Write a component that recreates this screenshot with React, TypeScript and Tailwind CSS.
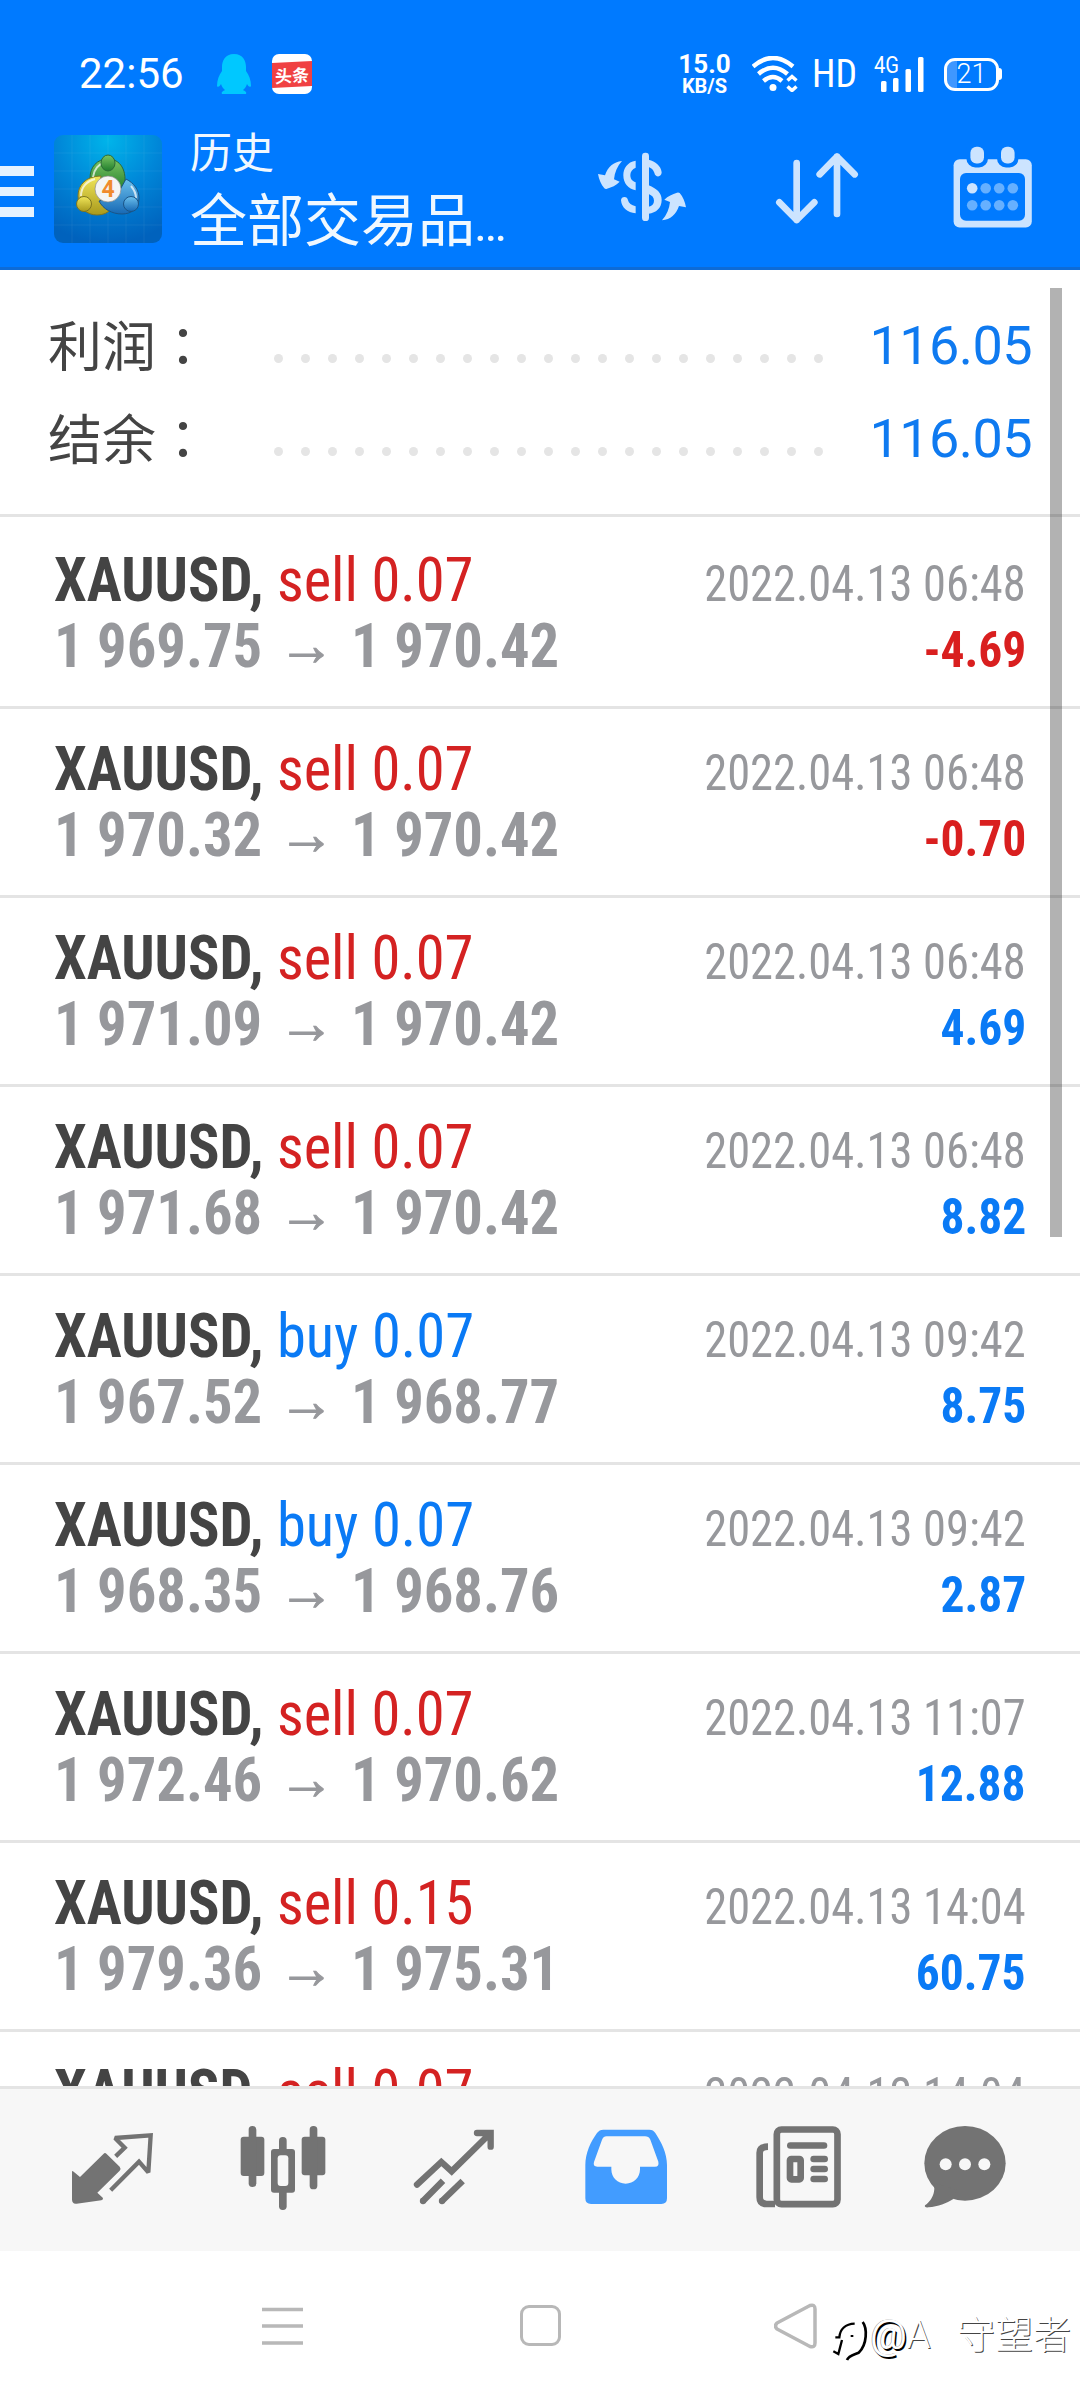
import React from "react";

interface Deal {
  side: "sell" | "buy";
  volume: string;
  open: string;
  close: string;
  time: string;
  profit: string;
}

const deals: Deal[] = [
  { side: "sell", volume: "0.07", open: "1 969.75", close: "1 970.42", time: "2022.04.13 06:48", profit: "-4.69" },
  { side: "sell", volume: "0.07", open: "1 970.32", close: "1 970.42", time: "2022.04.13 06:48", profit: "-0.70" },
  { side: "sell", volume: "0.07", open: "1 971.09", close: "1 970.42", time: "2022.04.13 06:48", profit: "4.69" },
  { side: "sell", volume: "0.07", open: "1 971.68", close: "1 970.42", time: "2022.04.13 06:48", profit: "8.82" },
  { side: "buy", volume: "0.07", open: "1 967.52", close: "1 968.77", time: "2022.04.13 09:42", profit: "8.75" },
  { side: "buy", volume: "0.07", open: "1 968.35", close: "1 968.76", time: "2022.04.13 09:42", profit: "2.87" },
  { side: "sell", volume: "0.07", open: "1 972.46", close: "1 970.62", time: "2022.04.13 11:07", profit: "12.88" },
  { side: "sell", volume: "0.15", open: "1 979.36", close: "1 975.31", time: "2022.04.13 14:04", profit: "60.75" },
  { side: "sell", volume: "0.07", open: "1 979.36", close: "1 975.31", time: "2022.04.13 14:04", profit: "28.35" },
];

const StatusBar: React.FC = () => (
  <div className="flex h-[54px] items-center text-white">
    <span className="ml-[79px] w-[106px] text-[42px] leading-none">22:56</span>
    <svg className="ml-[32px] h-[40px] w-[34px]" viewBox="0 0 34 40" fill="#00c8ff">
      <path d="M17 0C8 0 5 7 5 13v4c-3 4-5 9-5 15 1 2 3 0 4-2 1 3 2 4 4 6-2 1-4 2-3 4h24c1-2-1-3-3-4 2-2 3-3 4-6 1 2 3 4 4 2 0-6-2-11-5-15v-4c0-6-3-13-12-13z" />
    </svg>
    <div className="ml-[21px] flex h-[40px] w-[40px] items-center overflow-hidden rounded-[7px] bg-white">
      <div className="flex h-[25px] w-[40px] -skew-y-3 items-center justify-center bg-[#f04142]">
        <span className="font-['Noto_Sans_CJK_SC',sans-serif] text-[17px] leading-none font-bold">头条</span>
      </div>
    </div>
    <div className="ml-[366px] flex w-[53px] flex-col items-center font-bold">
      <span className="text-[26px] leading-[24px]">15.0</span>
      <span className="text-[20px] leading-[20px]">KB/S</span>
    </div>
    <svg className="ml-[21px] h-[36px] w-[46px]" viewBox="0 0 46 36" fill="none" stroke="#fff" strokeWidth="4.5">
      <path d="M1 10.500Q21-6.500 41 10.500M6.500 18Q21 5.500 35.500 18M11.500 25Q21 17 30 25" />
      <circle cx="21" cy="31.500" r="3.500" fill="#fff" stroke="none" />
      <path d="M35.500 24.500l4.500-4 4.500 4M35.500 30.500l4.500 4 4.500-4" strokeWidth="3.500" />
    </svg>
    <span className="ml-[14px] w-[44px] origin-left scale-x-97 text-[39px] leading-none font-stretch-[75%]">HD</span>
    <svg className="ml-[18px] h-[36px] w-[52px] overflow-visible" viewBox="0 0 52 36" fill="#fff">
      <text x="0" y="17" fontSize="23" textLength="25" lengthAdjust="spacingAndGlyphs">4G</text>
      <rect x="7" y="25" width="5.500" height="11" rx="1.500" />
      <rect x="19" y="22" width="5.500" height="14" rx="1.500" />
      <rect x="31.500" y="13" width="5.500" height="23" rx="1.500" />
      <rect x="44" y="1" width="5.500" height="35" rx="1.500" />
    </svg>
    <div className="ml-[18px] flex h-[33px] w-[55px] items-center justify-center rounded-[11px] border-[3px] border-white bg-[linear-gradient(90deg,#3f97ff_21%,transparent_21%)]">
      <span className="text-[27px] leading-none font-light">21</span>
    </div>
    <div className="h-[12px] w-[3px] rounded-r bg-white" />
  </div>
);

const Logo: React.FC = () => (
  <svg className="h-[108px] w-[108px] rounded-[9px]" viewBox="0 0 108 108">
    <defs>
      <radialGradient id="sky" cx="50%" cy="5%" r="95%">
        <stop offset="0" stopColor="#00b4ea" />
        <stop offset="0.500" stopColor="#0086d8" />
        <stop offset="1" stopColor="#0062bd" />
      </radialGradient>
      <linearGradient id="green" x1="0" y1="0" x2="0" y2="1">
        <stop offset="0" stopColor="#7cc563" />
        <stop offset="1" stopColor="#1f7d2c" />
      </linearGradient>
      <linearGradient id="gold" x1="0" y1="0" x2="0" y2="1">
        <stop offset="0" stopColor="#f1e65a" />
        <stop offset="1" stopColor="#a8991c" />
      </linearGradient>
      <linearGradient id="azure" x1="0" y1="0" x2="0" y2="1">
        <stop offset="0" stopColor="#6cc1ee" />
        <stop offset="1" stopColor="#1769b4" />
      </linearGradient>
    </defs>
    <rect width="108" height="108" fill="url(#sky)" />
    <path d="M18 0v108M36 0v108M54 0v108M72 0v108M90 0v108M0 18h108M0 36h108M0 54h108M0 72h108M0 90h108" stroke="#fff" strokeOpacity="0.060" />
    {/* three rings with ball heads */}
    <path d="M54 24C43 24 36 32 36 43L54 56L70 54C74 35 66 24 54 24Z" fill="url(#green)" stroke="#2c6a38" />
    <path d="M47 41C32 41 24 50 24 61C24 73 33 80 43 80C49 80 54 78 57 74L45 62Z" fill="url(#gold)" stroke="#7c7420" />
    <path d="M72 44C80 48 85 55 85 63C85 74 77 79 68 79C58 79 49 74 45 66L62 62Z" fill="url(#azure)" stroke="#1b5486" />
    <path d="M39 42C40 34 45 29 50 28M27 61C27 52 33 46 41 44M77 51Q82 57 82 63" fill="none" stroke="#fff" strokeOpacity="0.700" strokeWidth="2" />
    <ellipse cx="54" cy="28" rx="7" ry="8" fill="url(#green)" stroke="#2c6a38" />
    <circle cx="30" cy="69" r="7.500" fill="url(#gold)" stroke="#7c7420" />
    <circle cx="77" cy="69" r="7.500" fill="url(#azure)" stroke="#1b5486" />
    <circle cx="54" cy="54" r="13" fill="#f4f4f4" stroke="#8a8a8a" strokeWidth="0.700" />
    <text x="54" y="62" fontSize="23" fontWeight="700" textAnchor="middle" fill="#f08a2c">4</text>
  </svg>
);

const Header: React.FC = () => (
  <header className="h-[270px] border-b-[3px] border-[#0d6bd6] bg-[#007aff] pt-[47px]">
    <StatusBar />
    <div className="flex pt-[34px]">
      <div className="mt-[31px] flex flex-col gap-[11px]">
        <div className="h-[9.500px] w-[34px] bg-[#e6f2ff]" />
        <div className="h-[9.500px] w-[34px] bg-[#e6f2ff]" />
        <div className="h-[9.500px] w-[34px] bg-[#e6f2ff]" />
      </div>
      <div className="ml-[20px]">
        <Logo />
      </div>
      <div className="ml-[28px] w-[340px] font-['Roboto','Noto_Sans_CJK_SC',sans-serif] whitespace-nowrap text-[#f0f8ff]">
        <p className="-mt-[6px] text-[42px] leading-[50px]">历史</p>
        <p className="text-[57px] leading-[86px]">
          全部交易品<span className="-ml-[1px] text-[49px]">…</span>
        </p>
      </div>
      <svg className="mt-[17px] ml-[67px] h-[70px] w-[90px]" viewBox="21 36 270 210" fill="#cce4ff">
        <path d="M96 63C70 66 54 80 45 106L24 102C27 118 33 134 43 145Q47 148 51 146C65 142 78 136 89 125L72 118C74 98 82 78 96 63Z" />
        <path d="M96 63C70 66 54 80 45 106L24 102C27 118 33 134 43 145Q47 148 51 146C65 142 78 136 89 125L72 118C74 98 82 78 96 63Z" transform="rotate(180 156 152)" />
        <path d="M137 62C112 66 100 85 100 106C100 130 115 147 137 151V127C125 123 121 115 121 105C121 95 127 87 137 83Z" />
        <path d="M93 181C93 168 113 167 114 181C116 190 124 196 137 199V220C112 218 95 203 93 181Z" />
        <path d="M176 59C196 64 213 77 215 97C215 112 196 114 193 98C190 89 184 84 176 81Z" />
        <path d="M176 136C200 146 215 158 215 180C215 204 198 219 176 221V200C186 198 192 192 192 182C192 172 186 166 176 162Z" />
        <rect x="156" y="38" width="21" height="205" rx="10" />
      </svg>
      <svg className="mt-[17px] ml-[88px] h-[72px] w-[84px]" viewBox="555 36 252 216" fill="none" stroke="#cce4ff" strokeWidth="20" strokeLinecap="round" strokeLinejoin="round">
        <path d="M620 69V240M568 187L620 240L673 187" />
        <path d="M741 222V50M689 103L741 50L794 103" />
      </svg>
      <svg className="mt-[11px] ml-[94px] h-[82px] w-[80px]" viewBox="0 0 80 82" fill="#cce4ff">
        <rect x="0.600" y="13.300" width="78.200" height="68.200" rx="6" />
        <rect x="7" y="27" width="65" height="47.700" rx="6" fill="#007aff" />
        <rect x="13.400" y="-4" width="21.600" height="25.500" rx="9" fill="#007aff" />
        <rect x="44" y="-4" width="21.500" height="25.500" rx="9" fill="#007aff" />
        <rect x="17.400" y="0.700" width="13.600" height="16.800" rx="6" />
        <rect x="48" y="0.700" width="13.600" height="16.800" rx="6" />
        <circle cx="19.200" cy="42.300" r="5.300" />
        <g fill="#66b0ff">
          <circle cx="32.700" cy="42.300" r="5.300" />
          <circle cx="46.200" cy="42.300" r="5.300" />
          <circle cx="59.800" cy="42.300" r="5.300" />
          <circle cx="19.200" cy="59.300" r="5.300" />
          <circle cx="32.700" cy="59.300" r="5.300" />
          <circle cx="46.200" cy="59.300" r="5.300" />
          <circle cx="59.800" cy="59.300" r="5.300" />
        </g>
      </svg>
    </div>
  </header>
);

const SummaryRow: React.FC<{ label: string; value: string }> = ({ label, value }) => (
  <div className="flex h-[93px] items-center pl-[48px] text-[54px] leading-none">
    <span className="-mt-[4px] w-[226px] font-['Noto_Sans_CJK_TC','Noto_Sans_CJK_SC',sans-serif] whitespace-nowrap text-[#444444]">
      {label}
    </span>
    <div className="flex w-[549px] justify-between pt-[26px]">
      {Array.from({ length: 21 }, (_, i) => (
        <span key={i} className="h-[9px] w-[9px] rounded-full bg-[#e5e5e5]" />
      ))}
    </div>
    <span className="ml-auto pr-[48px] tracking-[-0.6px] text-[#0f7af0]">{value}</span>
  </div>
);

const DealRow: React.FC<{ deal: Deal }> = ({ deal }) => (
  <div className="h-[189px] shrink-0 border-b-[3px] border-[#e4e4e4] pt-[27px] pr-[54px] pl-[54px] font-stretch-[75%]">
    <div className="flex items-baseline justify-between whitespace-nowrap">
      <p className="origin-left scale-x-[0.944] text-[62px] leading-[66px]">
        <span className="font-bold text-[#444444]">XAUUSD,</span>{" "}
        <span className={deal.side === "sell" ? "text-[#d42222]" : "text-[#0a7af5]"}>
          {deal.side} {deal.volume}
        </span>
      </p>
      <span className="origin-right scale-x-93 text-[50px] leading-none text-[#97989c]">{deal.time}</span>
    </div>
    <div className="flex items-baseline whitespace-nowrap">
      <p className="flex origin-left scale-x-[0.945] items-baseline text-[62px] leading-[66px] font-bold text-[#97989c]">
        <span>{deal.open}</span>
        <span className="mx-[17px] -translate-y-[2px] font-['Liberation_Sans',sans-serif] text-[60px] leading-none [-webkit-text-stroke:1px_#97989c]">→</span>
        <span>{deal.close}</span>
      </p>
      <span
        className={
          deal.profit.startsWith("-")
            ? "ml-auto origin-right scale-x-[0.95] text-[50px] leading-none font-bold text-[#d91f1f]"
            : "ml-auto origin-right scale-x-[0.95] text-[50px] leading-none font-bold text-[#0a7af5]"
        }
      >
        {deal.profit}
      </span>
    </div>
  </div>
);

const TabBar: React.FC = () => (
  <nav className="flex h-[165px] gap-[81px] border-t-[3px] border-[#e4e4e4] bg-[#f7f7f7] pt-[31px] pl-[68px]">
    <svg className="h-[90px] w-[90px]" viewBox="24 30 270 270">
      <path d="M36 186Q36 181 41 185L60 201L131 131Q135 127 140 132L179 170Q184 176 179 182L112 248L129 264Q130 269 124 271L50 281Q36 283 36 268Z" fill="#737373" />
      <path d="M167 139L194 113L165 84L272 76L265 187L237 155L152 241" fill="none" stroke="#737373" strokeWidth="13" strokeMiterlimit="2" />
    </svg>
    <svg className="h-[90px] w-[90px]" viewBox="537 30 270 270" fill="#737373">
      <rect x="542" y="80" width="71" height="118" rx="9" />
      <rect x="566" y="48" width="23" height="183" rx="11" />
      <rect x="633" y="117" width="72" height="131" rx="9" />
      <rect x="657" y="81" width="23" height="219" rx="11" />
      <rect x="653" y="136" width="32" height="92" rx="9" fill="#f7f7f7" />
      <rect x="725" y="80" width="71" height="116" rx="9" />
      <rect x="749" y="48" width="23" height="190" rx="11" />
    </svg>
    <svg className="h-[90px] w-[90px]" viewBox="1050 30 270 270" fill="none" stroke="#737373" strokeWidth="19">
      <path d="M1071 224L1144 156L1175 184L1288 73M1251 69H1292V110" strokeLinecap="round" />
      <path d="M1089 273L1149 212M1146 273L1208 213" />
      <path d="M1089 273h.1M1146 273h.1" strokeLinecap="round" />
    </svg>
    <svg className="h-[90px] w-[90px]" viewBox="33 30 270 270" fill="#429cff">
      <path
        fillRule="evenodd"
        d="M100 59H238Q250 59 256 69C275 98 291 130 291 165V265Q291 282 274 282H63Q46 282 46 265V165C46 130 62 95 81 69Q88 59 100 59ZM110 79Q99 79 95 92L72 156Q68 170 82 170H124V178C124 203 143 221 167 221C191 221 210 203 210 178V170H255Q268 170 265 155L241 89Q236 79 225 79Z"
      />
    </svg>
    <svg className="h-[90px] w-[90px]" viewBox="546 30 270 270" fill="none" stroke="#737373" strokeWidth="20" strokeLinecap="round">
      <rect x="620.500" y="58.500" width="182" height="224" rx="14" />
      <path d="M594 110Q569 110 569 128V262Q569 282 590 282H615" strokeLinecap="butt" />
      <path d="M661 106.500H762M731 147H764M731 177H764M731 207H764" />
      <rect x="660" y="147" width="32" height="61" rx="4" />
    </svg>
    <svg className="h-[90px] w-[90px]" viewBox="1059 30 270 270" fill="#737373">
      <ellipse cx="1185" cy="160" rx="122" ry="112" />
      <path d="M1080 215Q1094 225 1093 236C1092 258 1080 275 1065 286Q1062 293 1075 292C1105 290 1130 280 1150 267L1160 240Z" />
      <g fill="#f7f7f7">
        <circle cx="1127" cy="163" r="18" />
        <circle cx="1185" cy="163" r="18" />
        <circle cx="1243" cy="163" r="18" />
      </g>
    </svg>
  </nav>
);

const SystemNav: React.FC = () => (
  <div className="relative flex h-[149px] items-center pl-[262px]">
    <svg className="h-[40px] w-[41px]" viewBox="0 0 41 40" stroke="#b8b8b8" strokeWidth="3.500">
      <path d="M0 3.500H41M0 20H41M0 37H41" />
    </svg>
    <div className="ml-[217px] h-[41px] w-[41px] rounded-[9px] border-[3px] border-[#b8b8b8]" />
    <svg className="ml-[213px] h-[46px] w-[44px]" viewBox="0 0 44 46" fill="none" stroke="#b8b8b8" strokeWidth="3.500" strokeLinejoin="round">
      <path d="M3 20Q0 23 3 26L36 43.500Q41 45 41 40V6Q41 1 36 2.500Z" />
    </svg>
    {/* watermark */}
    <div className="absolute top-[54px] left-[832px] flex items-center whitespace-nowrap text-white">
      <svg className="mt-[10px] h-[44px] w-[36px]" viewBox="0 0 108 132" fill="none" stroke="#000">
        <path d="M10 58H22C24 34 40 18 68 17" strokeWidth="7" />
        <path d="M30 66L19 108L4 100" strokeWidth="7" />
        <path d="M92 12C106 30 106 80 80 104C66 110 50 112 45 126" strokeWidth="8" />
        <path d="M56 54h8" strokeWidth="6" />
      </svg>
      <span className="ml-[2px] text-[41px] leading-[60px] [text-shadow:1.5px_1.5px_0_#000,-0.5px_-0.5px_0_#888]">@</span>
      <span className="font-['Roboto','Noto_Sans_CJK_SC',sans-serif] text-[38px] leading-[60px] font-light whitespace-pre [text-shadow:1px_1px_0_#444] [word-spacing:4px]">
        {"A  守望者"}
      </span>
    </div>
  </div>
);

const App: React.FC = () => (
  <div className="relative flex h-[2400px] w-[1080px] flex-col overflow-hidden bg-white font-['Roboto',sans-serif]">
    <Header />
    <section className="h-[247px] border-b-[3px] border-[#e4e4e4] pt-[29px]">
      <SummaryRow label="利润：" value="116.05" />
      <SummaryRow label="结余：" value="116.05" />
    </section>
    <main className="flex h-[1569px] flex-col overflow-hidden pt-[3px]">
      {deals.map((deal, i) => (
        <DealRow key={i} deal={deal} />
      ))}
    </main>
    <TabBar />
    <SystemNav />
    {/* scrollbar */}
    <div className="absolute top-[288px] left-[1050px] h-[949px] w-[12px] bg-black/30" />
  </div>
);

export default App;
